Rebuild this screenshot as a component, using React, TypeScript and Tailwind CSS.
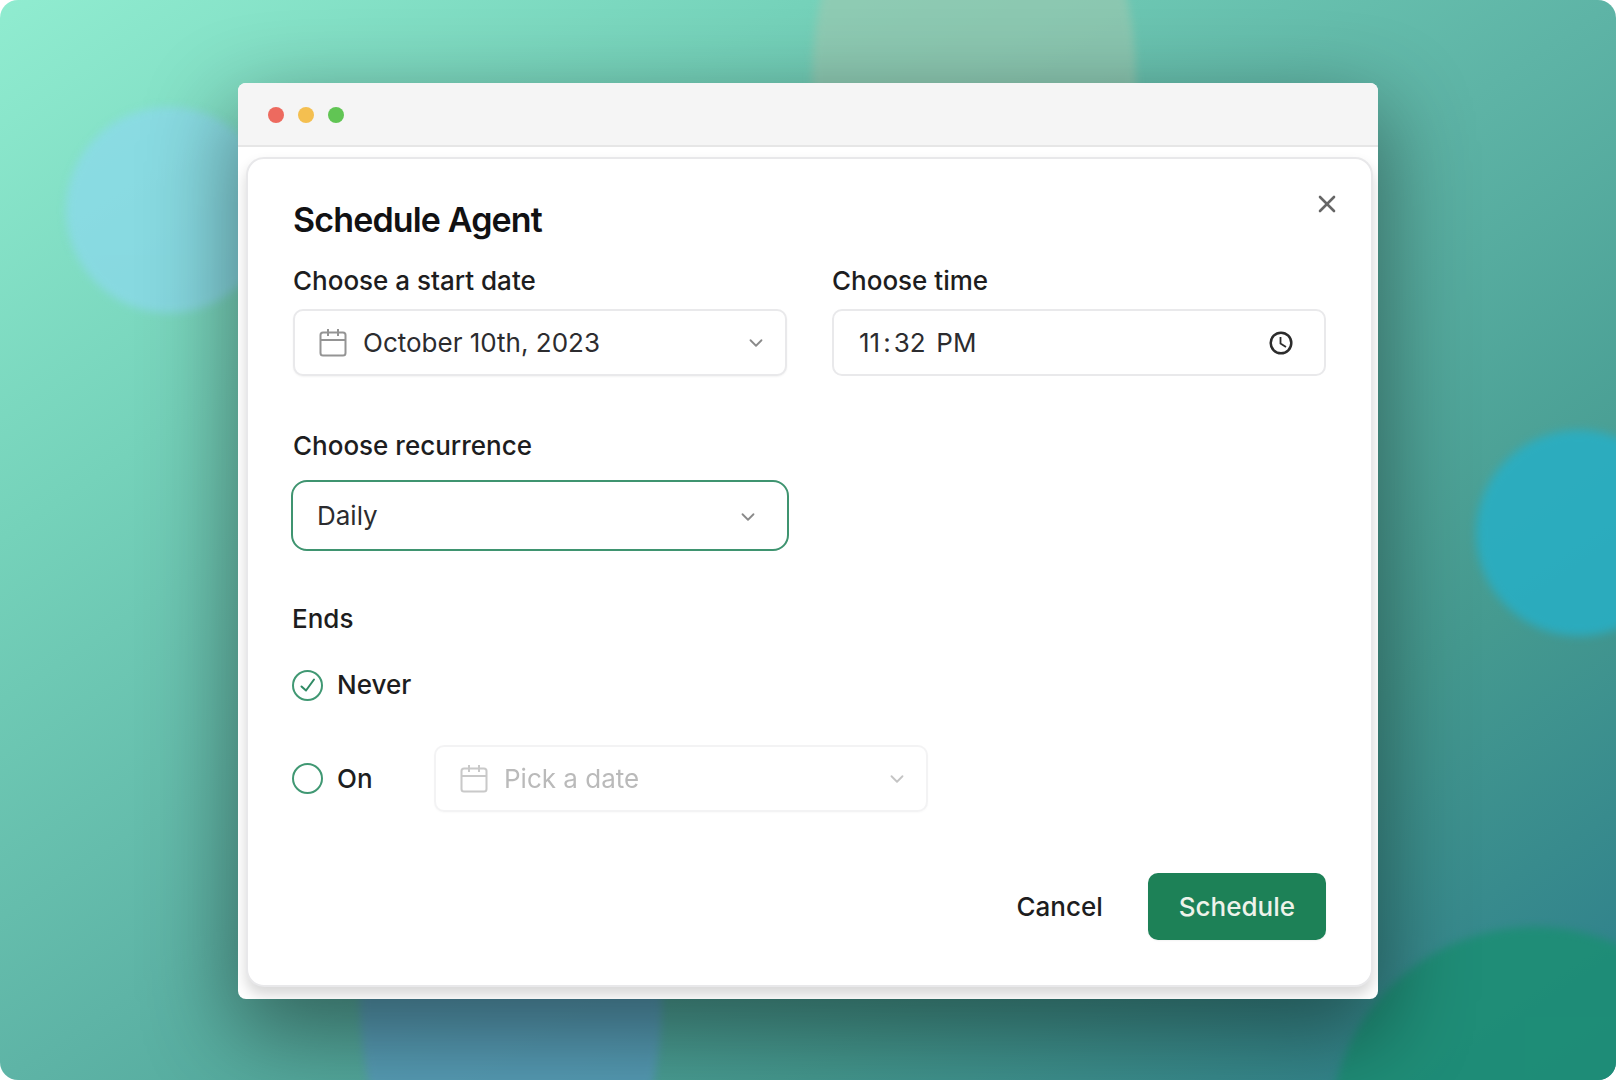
import { useState } from "react";
import type { ReactNode } from "react";
import { ChevronDown, X } from "lucide-react";

function Backdrop() {
  return (
    <div
      aria-hidden="true"
      className="absolute inset-0 bg-[linear-gradient(to_bottom_right,#90ecd0,#75d2ba_25%,#5eb4a6_50%,#459a90_75%,#2b7c8a)]"
    >
      <div className="absolute left-[66px] top-[107px] size-[206px] rounded-full bg-[#8cd9ee] opacity-70 blur-[4px]" />
      <div className="absolute left-1/2 top-[-170px] ml-1 h-[500px] w-[324px] rounded-[50%] bg-[#a0c8b0] opacity-60 blur-[4px]" />
      <div className="absolute -bottom-[170px] left-[360px] h-[500px] w-[302px] rounded-[50%] bg-[#5a9ac2] opacity-70 blur-[4px]" />
      <div className="absolute -right-[66px] top-[430px] size-[206px] rounded-full bg-[#27afc6] opacity-85 blur-[5px]" />
      <div className="absolute -bottom-[257px] -right-[124px] size-[410px] rounded-full bg-[#1d8e75] opacity-90 blur-[4px]" />
    </div>
  );
}

function CalendarIcon() {
  return (
    <svg viewBox="0 0 28 28" className="mr-4 size-7 text-[#949494]" fill="none" stroke="currentColor" strokeWidth="2">
      <rect x="1.5" y="3.5" width="25" height="23" rx="2.5" />
      <path d="M1.5 11h25M9 0v7M19 0v7" />
    </svg>
  );
}

function ClockIcon() {
  return (
    <svg
      viewBox="0 0 26 26"
      className="pointer-events-none absolute right-8 top-[21px] size-[26px] text-[#2c2c2c]"
      fill="none"
      stroke="currentColor"
    >
      <circle cx="13" cy="13" r="10.3" strokeWidth="2.5" />
      <path d="M12.5 7v6.5l5.5 3.5" strokeWidth="1.8" />
    </svg>
  );
}

function CheckIcon() {
  return (
    <svg
      viewBox="0 0 20 20"
      className="pointer-events-none absolute size-5 text-[#2f8a64]"
      fill="none"
      stroke="currentColor"
      strokeWidth="2"
      strokeLinecap="round"
      strokeLinejoin="round"
    >
      <path d="m3.5 11.5 4.5 4 8-11" />
    </svg>
  );
}

function TitleBar() {
  return (
    <div className="flex h-16 items-center gap-3.5 border-b-2 border-[#e6e6e6] bg-[#f5f5f5] px-[30px] pt-0.5">
      <span className="size-4 rounded-full bg-[#ed6a5f]" />
      <span className="size-4 rounded-full bg-[#f4bf50]" />
      <span className="size-4 rounded-full bg-[#61c554]" />
    </div>
  );
}

interface DateButtonProps {
  id: string;
  children: ReactNode;
  disabled?: boolean;
}

function DateButton({ id, children, disabled }: DateButtonProps) {
  return (
    <button
      id={id}
      type="button"
      disabled={disabled}
      className="flex h-[67px] w-full items-center rounded-[10px] border-2 border-[#e9e9eb] bg-white pr-[18px] pl-6 text-left shadow-xs disabled:opacity-50"
    >
      <CalendarIcon />
      <span className={disabled ? "text-[#777]" : "text-[#2c2c2f]"}>{children}</span>
      <ChevronDown className="ml-auto size-[22px] text-[#8a8a8a]" strokeWidth={2} />
    </button>
  );
}

interface EndOptionProps {
  id: string;
  label: string;
  checked: boolean;
  onChange: () => void;
}

function EndOption({ id, label, checked, onChange }: EndOptionProps) {
  return (
    <div className="flex items-center gap-3.5">
      <span className="relative flex size-[31px] items-center justify-center">
        <input
          id={id}
          type="radio"
          name="ends"
          checked={checked}
          onChange={onChange}
          className="size-full appearance-none rounded-full border-2 border-[#409873]"
        />
        {checked && <CheckIcon />}
      </span>
      <label htmlFor={id} className="font-medium">
        {label}
      </label>
    </div>
  );
}

export default function App() {
  const [time, setTime] = useState("23:32");
  const [recurrence, setRecurrence] = useState("Daily");
  const [ends, setEnds] = useState("never");

  return (
    <main className="relative min-h-screen overflow-hidden rounded-[18px] px-[238px] pt-[83px] pb-20 font-[Inter,sans-serif] text-[26px] leading-8 text-[#1d1d20]">
      <Backdrop />

      <section className="relative overflow-hidden rounded-lg bg-white shadow-[0_30px_90px_4px_rgba(0,0,0,0.44)]">
        <TitleBar />

        <div className="pt-2.5 pr-[5px] pb-3 pl-2">
          <form
            onSubmit={(e) => e.preventDefault()}
            className="relative rounded-[18px] border-2 border-[#e8e8ea] bg-white px-[45px] pt-[39px] pb-[45px] shadow-[0_8px_14px_rgba(0,0,0,0.16)]"
          >
            <button type="button" aria-label="Close" className="absolute top-[31px] right-[30px]">
              <X className="size-7 text-[#666]" strokeWidth={2.25} />
            </button>

            <h1 className="text-[34px] leading-[44px] font-semibold tracking-tight text-[#111113]">Schedule Agent</h1>

            <div className="mt-[23px] grid grid-cols-2 gap-x-[45px]">
              <div>
                <label htmlFor="start-date" className="mb-3 block font-medium">
                  Choose a start date
                </label>
                <DateButton id="start-date">October 10th, 2023</DateButton>
              </div>
              <div>
                <label htmlFor="time" className="mb-3 block font-medium">
                  Choose time
                </label>
                <div className="relative">
                  <input
                    id="time"
                    type="time"
                    value={time}
                    onChange={(e) => setTime(e.target.value)}
                    className="h-[67px] w-full rounded-[10px] border-2 border-[#e9e9eb] bg-white px-[22px] pt-0.5 text-[#2c2c2f] [&::-webkit-calendar-picker-indicator]:opacity-0 [&::-webkit-datetime-edit-ampm-field]:px-[3px] [&::-webkit-datetime-edit-hour-field]:px-[3px] [&::-webkit-datetime-edit-minute-field]:px-[3px]"
                  />
                  <ClockIcon />
                </div>
              </div>

              <div className="-mx-0.5 mt-[54px]">
                <label htmlFor="recurrence" className="mb-[18px] ml-0.5 block font-medium">
                  Choose recurrence
                </label>
                <div className="relative">
                  <select
                    id="recurrence"
                    value={recurrence}
                    onChange={(e) => setRecurrence(e.target.value)}
                    className="h-[71px] w-full appearance-none rounded-2xl border-2 border-[#3f9470] bg-white px-6 text-[#2c2c2f]"
                  >
                    <option>Daily</option>
                    <option>Weekly</option>
                    <option>Monthly</option>
                  </select>
                  <ChevronDown
                    className="pointer-events-none absolute top-[26px] right-[30px] size-[22px] text-[#8a8a8a]"
                    strokeWidth={2}
                  />
                </div>
              </div>
            </div>

            <fieldset className="mt-[52px] -ml-px">
              <legend className="font-medium">Ends</legend>
              <div className="mt-[34px]">
                <EndOption id="ends-never" label="Never" checked={ends === "never"} onChange={() => setEnds("never")} />
              </div>
              <div className="mt-11 flex items-center">
                <div className="w-[142px]">
                  <EndOption id="ends-on" label="On" checked={ends === "on"} onChange={() => setEnds("on")} />
                </div>
                <div className="w-full max-w-[494px]">
                  <DateButton id="end-date" disabled={ends !== "on"}>
                    Pick a date
                  </DateButton>
                </div>
              </div>
            </fieldset>

            <div className="mt-[61px] flex justify-end gap-3.5">
              <button type="button" className="h-[67px] rounded-[10px] px-[31px] font-medium">
                Cancel
              </button>
              <button
                type="submit"
                className="h-[67px] rounded-[10px] bg-[#1d8157] px-[31px] font-medium text-[#eef3ea] shadow-xs"
              >
                Schedule
              </button>
            </div>
          </form>
        </div>
      </section>
    </main>
  );
}
